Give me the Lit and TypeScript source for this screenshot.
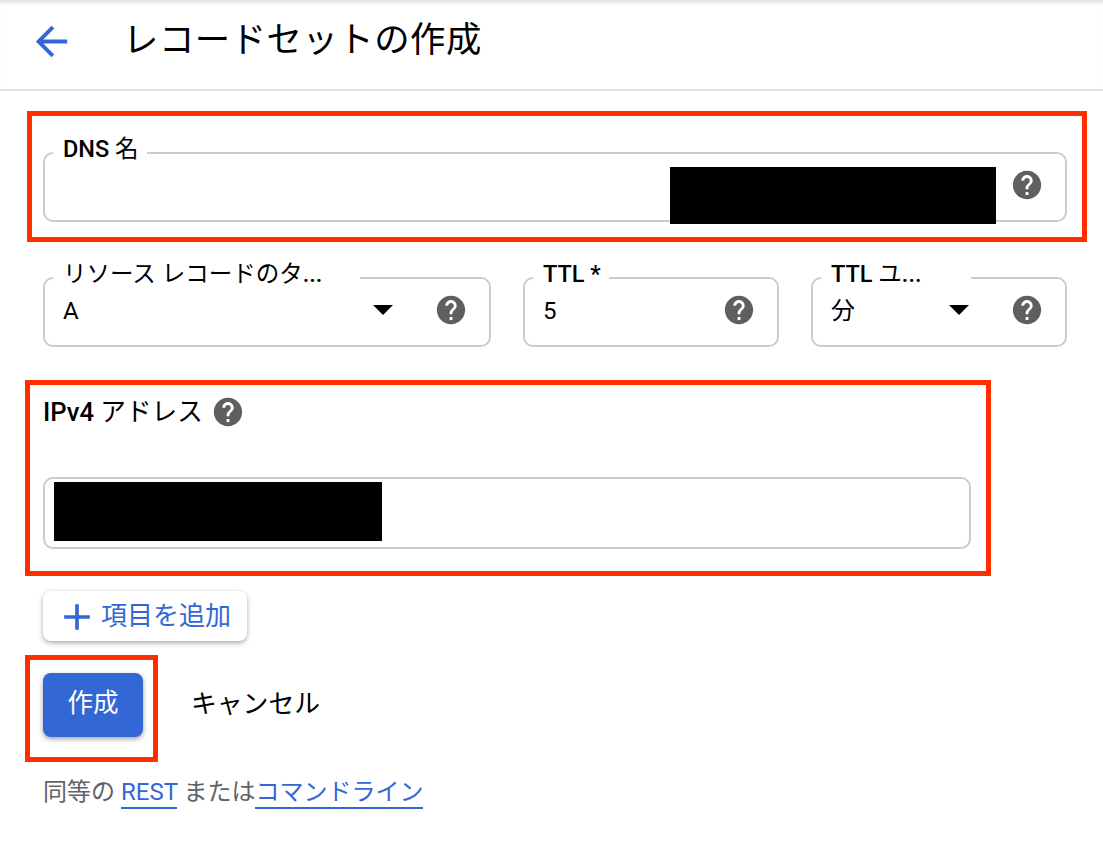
import { LitElement, html, css } from 'lit';
import { customElement } from 'lit/decorators.js';

const helpIcon = html`<svg class="help" viewBox="0 0 24 24"><path d="M12 2C6.48 2 2 6.48 2 12s4.48 10 10 10 10-4.48 10-10S17.52 2 12 2zm1 17h-2v-2h2v2zm2.07-7.75l-.9.92C13.45 12.9 13 13.5 13 15h-2v-.5c0-1.1.45-2.1 1.17-2.83l1.24-1.26c.37-.36.59-.86.59-1.41 0-1.1-.9-2-2-2s-2 .9-2 2H8c0-2.21 1.79-4 4-4s4 1.79 4 4c0 .88-.36 1.68-.93 2.25z"/></svg>`;
const caret = html`<svg class="caret" viewBox="0 0 20 10"><path d="M0 0h20L10 10z"/></svg>`;

@customElement('app-root')
export class AppRoot extends LitElement {
  static styles = css`
    :host {
      display: block;
      min-height: 845px;
      background: #fff;
      color: #000;
      font-family: Roboto, 'Noto Sans CJK JP', sans-serif;
      font-size: 24px;
    }
    b { font-weight: 500; }
    .header {
      height: 89px;
      display: flex;
      align-items: center;
      padding-left: 28px;
      border-bottom: 2px solid #e3e3e3;
      box-shadow: inset 0 5px 4px -3px rgba(0, 0, 0, 0.16);
    }
    .back { width: 47px; height: 47px; fill: #3367d6; margin-top: -7px; }
    .header h1 {
      margin: -10px 0 0 48px;
      font-size: 35.4px;
      font-weight: 400;
      letter-spacing: 0.5px;
      line-height: 44px;
    }
    .main { padding-left: 25px; }
    .red { border: 5px solid #ff2d00; box-sizing: border-box; }
    .dns-box {
      width: 1060px;
      height: 131px;
      margin: 20px 0 0 2px;
      padding: 36px 15px 0 11px;
    }
    .field {
      position: relative;
      box-sizing: border-box;
      height: 70px;
      border: 2px solid #ccc;
      border-radius: 10px;
      display: flex;
      align-items: center;
      padding: 0 21px 4px 18px;
    }
    .label {
      position: absolute;
      top: -18px;
      left: 8px;
      padding: 0 8px 0 10px;
      background: #fff;
      font-size: 23.5px;
      line-height: 26px;
      white-space: nowrap;
    }
    .label.cut { padding-right: 38px; }
    .label.cut-short { padding-right: 50px; }
    .value { flex: 1; line-height: 30px; margin-top: 2px; }
    .help { width: 34px; height: 34px; fill: #5f5f5f; flex: none; }
    .caret { width: 20px; height: 10px; fill: #000; flex: none; margin-right: 41px; }
    .redact { position: absolute; background: #000; }
    .dns-redact { left: 625px; top: 13px; width: 326px; height: 57px; }
    .row {
      display: grid;
      grid-template-columns: 448px 256px 256px;
      gap: 32px;
      margin: 35px 0 0 18px;
      width: 1024px;
    }
    .ip-box {
      width: 966px;
      height: 196px;
      margin-top: 33px;
      padding: 10px 15px 0 13px;
    }
    .ip-label {
      display: flex;
      align-items: center;
      gap: 8px;
      height: 34px;
      font-size: 25.6px;
      line-height: 34px;
    }
    .ip-field {
      position: relative;
      box-sizing: border-box;
      height: 72px;
      margin-top: 48px;
      border: 2px solid #ccc;
      border-radius: 10px;
    }
    .ip-redact { left: 9px; top: 3px; width: 328px; height: 59px; }
    .add {
      display: inline-flex;
      align-items: center;
      box-sizing: border-box;
      width: 204px;
      height: 50px;
      margin: 15px 0 0 18px;
      padding-left: 12px;
      gap: 2px;
      border-radius: 8px;
      background: #fff;
      color: #3367d6;
      font-size: 26px;
      box-shadow: 0 2px 5px rgba(60, 64, 67, 0.45);
    }
    .add span { margin-top: -6px; }
    .plus { width: 44px; height: 44px; fill: #3367d6; flex: none; margin-top: 2px; }
    .actions { display: flex; align-items: center; margin-top: 10px; }
    .create-box {
      width: 133px;
      height: 107px;
      padding: 13px 0 0 13px;
    }
    .create {
      display: flex;
      align-items: center;
      justify-content: center;
      width: 100px;
      height: 64px;
      padding-bottom: 9px;
      box-sizing: border-box;
      border-radius: 8px;
      background: #3367d6;
      color: #fff;
      font-size: 25.6px;
      box-shadow: 0 2px 5px rgba(60, 64, 67, 0.5);
    }
    .cancel { margin: -15px 0 0 33px; font-size: 25.8px; }
    .footer { margin: 13px 0 0 18px; color: #5f6368; font-size: 24px; line-height: 34px; white-space: nowrap; }
    .footer a { color: #3367d6; border-bottom: 2px solid #3367d6; padding-bottom: 1px; text-decoration: none; }
  `;

  render() {
    return html`
      <div class="header">
        <svg class="back" viewBox="0 0 24 24"><path d="M20 11H7.83l5.59-5.59L12 4l-8 8 8 8 1.41-1.41L7.83 13H20v-2z"/></svg>
        <h1>レコードセットの作成</h1>
      </div>
      <div class="main">
        <div class="red dns-box">
          <div class="field">
            <span class="label"><b>DNS</b> 名</span>
            <span class="value"></span>
            ${helpIcon}
            <div class="redact dns-redact"></div>
          </div>
        </div>
        <div class="row">
          <div class="field">
            <span class="label cut">リソース レコードのタ<b>...</b></span>
            <span class="value">A</span>${caret}${helpIcon}
          </div>
          <div class="field">
            <span class="label"><b>TTL *</b></span>
            <span class="value">5</span>${helpIcon}
          </div>
          <div class="field">
            <span class="label cut-short"><b>TTL</b> ユ<b>...</b></span>
            <span class="value">分</span>${caret}${helpIcon}
          </div>
        </div>
        <div class="red ip-box">
          <div class="ip-label"><span><b>IPv4</b> アドレス</span>${helpIcon}</div>
          <div class="ip-field"><div class="redact ip-redact"></div></div>
        </div>
        <div class="add">
          <svg class="plus" viewBox="0 0 24 24"><path d="M19 13h-6v6h-2v-6H5v-2h6V5h2v6h6v2z"/></svg>
          <span>項目を追加</span>
        </div>
        <div class="actions">
          <div class="red create-box"><div class="create">作成</div></div>
          <div class="cancel">キャンセル</div>
        </div>
        <div class="footer">同等の <a>REST</a> または<a>コマンドライン</a></div>
      </div>
    `;
  }
}
